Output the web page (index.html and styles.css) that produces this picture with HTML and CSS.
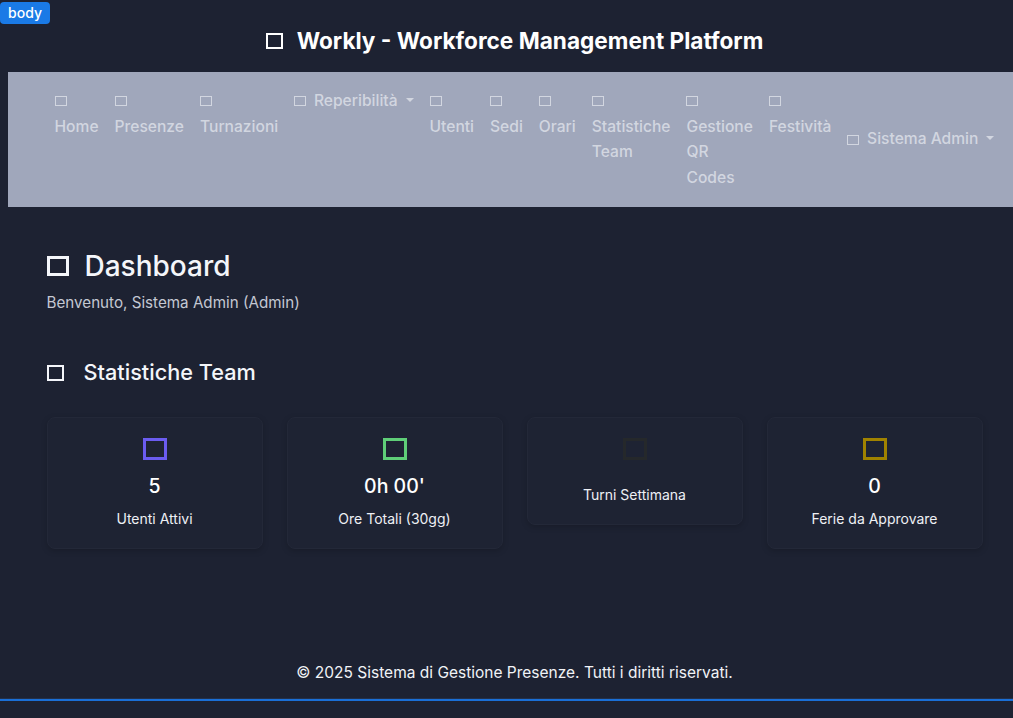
FILE: index.html
```html
<!DOCTYPE html>
<html lang="it">
<head>
<meta charset="utf-8">
<title>Workly - Dashboard</title>
<link rel="stylesheet" href="styles.css">
</head>
<body>
<div class="inspect-badge">body</div>
<header class="site-header">
  <h1 class="site-title"><span class="box box-title"></span>Workly - Workforce Management Platform</h1>
</header>
<nav class="navbar">
  <div class="nav-container">
    <ul class="nav-main">
      <li><a class="nav-link" href="#"><span class="box box-nav"></span> Home</a></li>
      <li><a class="nav-link" href="#"><span class="box box-nav"></span> Presenze</a></li>
      <li><a class="nav-link" href="#"><span class="box box-nav"></span> Turnazioni</a></li>
      <li><a class="nav-link dropdown-toggle" href="#"><span class="box box-nav"></span> Reperibilità</a></li>
      <li><a class="nav-link" href="#"><span class="box box-nav"></span> Utenti</a></li>
      <li><a class="nav-link" href="#"><span class="box box-nav"></span> Sedi</a></li>
      <li><a class="nav-link" href="#"><span class="box box-nav"></span> Orari</a></li>
      <li><a class="nav-link" href="#"><span class="box box-nav"></span> Statistiche Team</a></li>
      <li><a class="nav-link" href="#"><span class="box box-nav"></span> Gestione QR Codes</a></li>
      <li><a class="nav-link" href="#"><span class="box box-nav"></span> Festività</a></li>
      <li class="nav-user"><a class="nav-link dropdown-toggle" href="#"><span class="box box-nav"></span> Sistema Admin</a></li>
    </ul>
  </div>
</nav>
<main class="container">
  <section class="page-head">
    <h2 class="page-title"><span class="box box-lg"></span>Dashboard</h2>
    <p class="page-sub">Benvenuto, Sistema Admin (Admin)</p>
  </section>
  <h3 class="section-title"><span class="box box-md"></span>Statistiche Team</h3>
  <div class="stats-row">
    <div class="stat-card">
      <span class="box box-stat stat-purple"></span>
      <div class="stat-value">5</div>
      <div class="stat-label">Utenti Attivi</div>
    </div>
    <div class="stat-card">
      <span class="box box-stat stat-green"></span>
      <div class="stat-value">0h 00'</div>
      <div class="stat-label">Ore Totali (30gg)</div>
    </div>
    <div class="stat-card">
      <span class="box box-stat stat-dark"></span>
      <div class="stat-value"></div>
      <div class="stat-label">Turni Settimana</div>
    </div>
    <div class="stat-card">
      <span class="box box-stat stat-gold"></span>
      <div class="stat-value">0</div>
      <div class="stat-label">Ferie da Approvare</div>
    </div>
  </div>
</main>
<footer class="site-footer">
  <p>© 2025 Sistema di Gestione Presenze. Tutti i diritti riservati.</p>
</footer>
<div class="inspect-line"></div>
</body>
</html>
```

FILE: styles.css
```css
html {
  background: #1d2232;
  overflow: hidden;
}
body {
  margin: 0 0 0 8px;
  width: 1013px;
  min-height: 718px;
  font-family: Inter, "Noto Sans", "Liberation Sans", sans-serif;
  color: #f1f3f7;
  background: #1d2232;
  position: relative;
}
.box {
  display: inline-block;
  box-sizing: border-box;
  border-style: solid;
  border-color: currentColor;
  vertical-align: middle;
}
.inspect-badge {
  position: fixed;
  left: 0;
  top: 2px;
  width: 50px;
  height: 22px;
  border-radius: 4px;
  background: #1a7ae6;
  color: #fff;
  font-size: 14px;
  font-weight: 500;
  line-height: 22px;
  text-align: center;
  z-index: 10;
}
.inspect-line {
  position: fixed;
  left: 0;
  right: 0;
  top: 699px;
  height: 2px;
  background: #1a6fd6;
  border-top: 1px solid #233049;
  margin-top: -1px;
}
.site-header {
  padding: 28px 0 18px;
  text-align: center;
}
.site-title {
  margin: 0;
  font-size: 22.6px;
  font-weight: 700;
  line-height: 26px;
  color: #ffffff;
}
.box-title {
  width: 17px;
  height: 16px;
  border-width: 2px;
  margin: -3px 14px 0 0;
}
.navbar {
  background: #a0a7bb;
  padding: 8px 0 8.6px;
}
.nav-container {
  width: 960px;
  margin: 0 auto;
  padding: 0 12px;
  box-sizing: border-box;
}
.nav-main {
  list-style: none;
  margin: 0;
  padding: 0;
  display: flex;
  align-items: flex-start;
}
.nav-main li {
  flex: none;
}
.nav-main .nav-user {
  align-self: center;
}
.nav-link {
  display: block;
  width: min-content;
  padding: 8px;
  font-size: 15.6px;
  font-weight: 500;
  line-height: 25.6px;
  color: #d2d6e0;
  text-decoration: none;
}
.box-nav {
  width: 12px;
  height: 10px;
  border-width: 1px;
  margin: -1px 3.5px 0 0;
}
.dropdown-toggle {
  width: auto;
  white-space: nowrap;
}
.dropdown-toggle::after {
  content: "";
  display: inline-block;
  margin-left: 8px;
  vertical-align: 4px;
  border-top: 4.8px solid;
  border-left: 4.8px solid transparent;
  border-right: 4.8px solid transparent;
}
.container {
  width: 960px;
  margin: 0 auto;
  padding: 42px 12px 0;
  box-sizing: border-box;
}
.page-title {
  margin: 0;
  font-size: 28px;
  font-weight: 500;
  line-height: 34px;
  color: #f4f6fa;
}
.box-lg {
  width: 22px;
  height: 20px;
  border-width: 3px;
  margin: -4px 16px 0 0;
}
.page-sub {
  margin: 9px 0 0;
  font-size: 15.2px;
  line-height: 22px;
  color: #c4c8d2;
}
.section-title {
  margin: 45px 0 0;
  font-size: 21.7px;
  font-weight: 500;
  line-height: 26px;
  color: #f4f6fa;
}
.box-md {
  width: 17px;
  height: 16px;
  border-width: 2px;
  margin: -3px 20px 0 0;
}
.stats-row {
  display: flex;
  gap: 24px;
  margin-top: 32px;
  align-items: flex-start;
}
.stat-card {
  flex: 1 1 0;
  display: flex;
  flex-direction: column;
  align-items: center;
  background: #1e2333;
  border: 1px solid #232838;
  border-radius: 8px;
  box-shadow: 0 2px 6px rgba(0, 0, 0, 0.18);
  padding: 20px 12px 19px;
  text-align: center;
}
.box-stat {
  display: block;
  width: 24px;
  height: 22px;
  border-width: 3px;
  margin: 0 0 14px;
}
.stat-purple { color: #6b5cf0; }
.stat-green { color: #5fce78; }
.stat-dark { color: #25282b; }
.stat-gold { color: #a08200; }
.stat-value {
  font-size: 19.5px;
  font-weight: 500;
  line-height: 24px;
  margin-bottom: 10px;
  color: #ffffff;
}
.stat-value:empty {
  height: 0;
}
.stat-label {
  font-size: 14px;
  line-height: 21px;
  color: #eef0f5;
}
.site-footer {
  text-align: center;
  padding-top: 113px;
}
.site-footer p {
  margin: 0;
  font-size: 15.5px;
  line-height: 22px;
  color: #f1f3f7;
}
```
